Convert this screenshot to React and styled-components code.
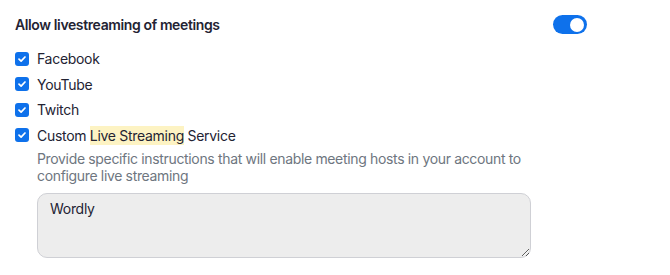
import React, { useState } from "react";
import styled, { createGlobalStyle } from "styled-components";

const Global = createGlobalStyle`
  body {
    margin: 0;
    background: #fff;
    font-family: Inter, "Noto Sans", sans-serif;
    -webkit-font-smoothing: antialiased;
  }
`;

const Section = styled.div`
  width: 670px;
  padding: 14px 15px 0 15px;
  box-sizing: border-box;
  letter-spacing: -0.38px;
`;

const Header = styled.div`
  display: flex;
  align-items: center;
  justify-content: space-between;
  width: 572px;
  height: 21px;
`;

const Title = styled.div`
  font-size: 14px;
  font-weight: 600;
  color: #232333;
`;

const Toggle = styled.button`
  position: relative;
  width: 34px;
  height: 19px;
  border: none;
  border-radius: 10px;
  padding: 0;
  background: ${({ $on }) => ($on ? "#0e71eb" : "#babacc")};
  cursor: pointer;
  &::after {
    content: "";
    position: absolute;
    top: 2.5px;
    left: ${({ $on }) => ($on ? "17px" : "2.5px")};
    width: 14px;
    height: 14px;
    border-radius: 50%;
    background: #fff;
  }
`;

const Options = styled.div`
  display: flex;
  flex-direction: column;
  gap: 6px;
  margin-top: 14px;
`;

const Option = styled.label`
  display: flex;
  align-items: center;
  gap: 8px;
  height: 19.5px;
  font-size: 14px;
  letter-spacing: -0.3px;
  color: #232333;
  cursor: pointer;
`;

const Box = styled.span`
  width: 14px;
  height: 14px;
  border-radius: 3px;
  background: #0e71eb;
  display: flex;
  align-items: center;
  justify-content: center;
  flex-shrink: 0;
`;

const Mark = styled.mark`
  background: #fdf3c3;
  color: inherit;
  padding: 1px 0;
`;

const Details = styled.div`
  padding-left: 22px;
`;

const Hint = styled.p`
  margin: 5px 0 0;
  width: 500px;
  font-size: 14px;
  line-height: 17px;
  letter-spacing: -0.34px;
  color: #6e7680;
`;

const Area = styled.textarea`
  display: block;
  margin-top: 9px;
  width: 494px;
  height: 65px;
  box-sizing: border-box;
  padding: 6px 12px;
  border: 1px solid #cfd0d5;
  border-radius: 10px;
  background: #ededed;
  font-family: Inter, "Noto Sans", sans-serif;
  font-size: 14px;
  letter-spacing: -0.3px;
  color: #232333;
  outline: none;
`;

const Check = () => (
  <Box>
    <svg width="10" height="10" viewBox="0 0 10 10">
      <path d="M2 5.2 L4.1 7.2 L8 3" fill="none" stroke="#fff" strokeWidth="1.7" strokeLinecap="round" strokeLinejoin="round" />
    </svg>
  </Box>
);

export default function App() {
  const [on, setOn] = useState(true);
  return (
    <Section>
      <Global />
      <Header>
        <Title>Allow livestreaming of meetings</Title>
        <Toggle $on={on} onClick={() => setOn(!on)} />
      </Header>
      <Options>
        <Option><Check />Facebook</Option>
        <Option><Check />YouTube</Option>
        <Option><Check />Twitch</Option>
        <Option><Check /><span>Custom <Mark>Live Streaming</Mark> Service</span></Option>
      </Options>
      <Details>
        <Hint>
          Provide specific instructions that will enable meeting hosts in your account to configure live streaming
        </Hint>
        <Area defaultValue="Wordly" />
      </Details>
    </Section>
  );
}
